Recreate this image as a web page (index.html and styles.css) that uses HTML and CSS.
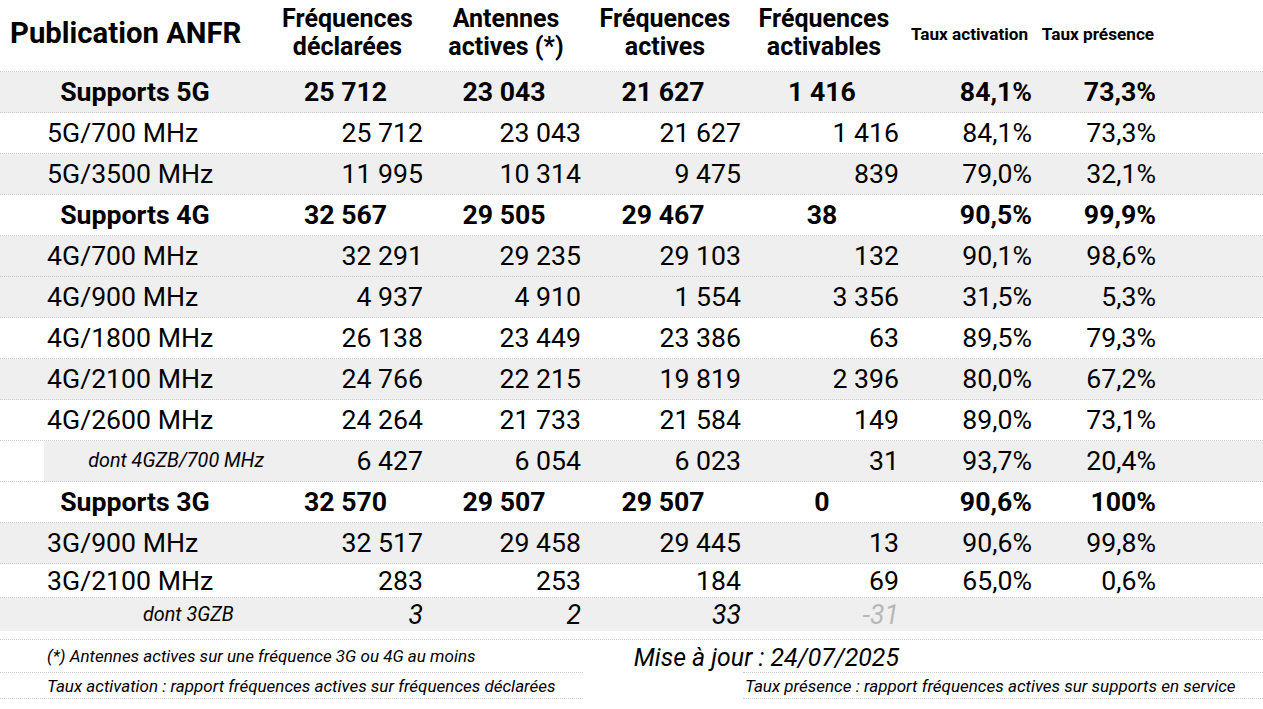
FILE: index.html
```html
<!DOCTYPE html>
<html lang="fr">
<head>
<meta charset="utf-8">
<title>Publication ANFR</title>
<link rel="stylesheet" href="styles.css">
</head>
<body>
<div class="sheet">
  <div class="head">
    <div class="head-title">Publication ANFR</div>
    <div class="head-col">Fréquences<br>déclarées</div>
    <div class="head-col">Antennes<br>actives (*)</div>
    <div class="head-col">Fréquences<br>actives</div>
    <div class="head-col">Fréquences<br>activables</div>
    <div class="head-col head-small">Taux activation</div>
    <div class="head-col head-small">Taux présence</div>
    <div></div>
  </div>

  <div class="row alt total">
    <div class="lbl">Supports 5G</div><div class="num">25 712</div><div class="num">23 043</div><div class="num">21 627</div><div class="num">1 416</div><div class="pct">84,1%</div><div class="pct">73,3%</div><div></div>
  </div>
  <div class="row">
    <div class="lbl">5G/700 MHz</div><div class="num">25 712</div><div class="num">23 043</div><div class="num">21 627</div><div class="num">1 416</div><div class="pct">84,1%</div><div class="pct">73,3%</div><div></div>
  </div>
  <div class="row alt">
    <div class="lbl">5G/3500 MHz</div><div class="num">11 995</div><div class="num">10 314</div><div class="num">9 475</div><div class="num">839</div><div class="pct">79,0%</div><div class="pct">32,1%</div><div></div>
  </div>

  <div class="row total">
    <div class="lbl">Supports 4G</div><div class="num">32 567</div><div class="num">29 505</div><div class="num">29 467</div><div class="num">38</div><div class="pct">90,5%</div><div class="pct">99,9%</div><div></div>
  </div>
  <div class="row alt">
    <div class="lbl">4G/700 MHz</div><div class="num">32 291</div><div class="num">29 235</div><div class="num">29 103</div><div class="num">132</div><div class="pct">90,1%</div><div class="pct">98,6%</div><div></div>
  </div>
  <div class="row alt">
    <div class="lbl">4G/900 MHz</div><div class="num">4 937</div><div class="num">4 910</div><div class="num">1 554</div><div class="num">3 356</div><div class="pct">31,5%</div><div class="pct">5,3%</div><div></div>
  </div>
  <div class="row">
    <div class="lbl">4G/1800 MHz</div><div class="num">26 138</div><div class="num">23 449</div><div class="num">23 386</div><div class="num">63</div><div class="pct">89,5%</div><div class="pct">79,3%</div><div></div>
  </div>
  <div class="row alt">
    <div class="lbl">4G/2100 MHz</div><div class="num">24 766</div><div class="num">22 215</div><div class="num">19 819</div><div class="num">2 396</div><div class="pct">80,0%</div><div class="pct">67,2%</div><div></div>
  </div>
  <div class="row">
    <div class="lbl">4G/2600 MHz</div><div class="num">24 264</div><div class="num">21 733</div><div class="num">21 584</div><div class="num">149</div><div class="pct">89,0%</div><div class="pct">73,1%</div><div></div>
  </div>
  <div class="row sub-4g">
    <div class="lbl lbl-sub">dont 4GZB/700 MHz</div><div class="num">6 427</div><div class="num">6 054</div><div class="num">6 023</div><div class="num">31</div><div class="pct">93,7%</div><div class="pct">20,4%</div><div></div>
  </div>

  <div class="row total">
    <div class="lbl">Supports 3G</div><div class="num">32 570</div><div class="num">29 507</div><div class="num">29 507</div><div class="num">0</div><div class="pct">90,6%</div><div class="pct">100%</div><div></div>
  </div>
  <div class="row alt">
    <div class="lbl">3G/900 MHz</div><div class="num">32 517</div><div class="num">29 458</div><div class="num">29 445</div><div class="num">13</div><div class="pct">90,6%</div><div class="pct">99,8%</div><div></div>
  </div>
  <div class="row short">
    <div class="lbl">3G/2100 MHz</div><div class="num">283</div><div class="num">253</div><div class="num">184</div><div class="num">69</div><div class="pct">65,0%</div><div class="pct">0,6%</div><div></div>
  </div>
  <div class="row alt short2 italic">
    <div class="lbl lbl-sub3">dont 3GZB</div><div class="num">3</div><div class="num">2</div><div class="num">33</div><div class="num muted">-31</div><div class="pct"></div><div class="pct"></div><div></div>
  </div>

  <div class="foot">
    <div class="foot-row foot-row1">
      <div class="note">(*) Antennes actives sur une fréquence 3G ou 4G au moins</div>
      <div class="update">Mise à jour : 24/07/2025</div>
    </div>
    <div class="foot-row foot-row2">
      <div class="note lined">Taux activation : rapport fréquences actives sur fréquences déclarées</div>
      <div></div>
      <div class="note note-right lined">Taux présence : rapport fréquences actives sur supports en service</div>
    </div>
  </div>
</div>
</body>
</html>
```

FILE: styles.css
```css
* { box-sizing: border-box; }

html, body {
  margin: 0;
  padding: 0;
  background: #ffffff;
}

body {
  font-family: Roboto, "Liberation Sans", sans-serif;
  color: #000000;
  width: 1263px;
}

.sheet {
  width: 1263px;
}

.head,
.row {
  display: grid;
  grid-template-columns: 268px 159px 158px 160px 158px 133px 124px 1fr;
  align-items: center;
  border-bottom: 1px dotted #cccccc;
}

.head {
  height: 72px;
}

.head-title {
  font-size: 29.3px;
  font-weight: 700;
  padding-left: 10px;
  padding-bottom: 5px;
  white-space: nowrap;
}

.head-col {
  font-size: 25px;
  font-weight: 700;
  line-height: 28px;
  text-align: center;
  padding-bottom: 6px;
}

.head-small {
  font-size: 17.2px;
  line-height: 20px;
  white-space: nowrap;
  padding-bottom: 4px;
}

.row {
  height: 41px;
  font-size: 26.67px;
  line-height: 32px;
}

.row.alt {
  background: #efefef;
}

.row.sub-4g {
  background: linear-gradient(to right, #ffffff 44px, #efefef 44px);
}

.lbl {
  padding-left: 47px;
  white-space: nowrap;
}

.total .lbl {
  padding-left: 2px;
  text-align: center;
}

.total {
  font-weight: 700;
}

.num,
.pct {
  text-align: right;
  padding-right: 4px;
  white-space: nowrap;
}

.total .num {
  text-align: center;
}

.lbl-sub {
  font-style: italic;
  font-size: 19.8px;
  text-align: right;
  padding-left: 0;
  padding-right: 4px;
}

.lbl-sub3 {
  font-size: 19.8px;
  padding-left: 143px;
}

.italic {
  font-style: italic;
}

.muted {
  color: #b7b7b7;
}

.row.short {
  height: 34px;
  line-height: 30px;
}

.row.short2 {
  height: 33px;
  border-bottom: none;
  line-height: 30px;
}

.foot {
  margin-top: 8px;
  border-top: 1px dotted #cccccc;
}

.foot-row {
  display: grid;
  grid-template-columns: 583px 160px 1fr;
  align-items: center;
}

.foot-row1 {
  height: 32px;
  grid-template-columns: 583px 320px 1fr;
}

.foot-row2 {
  height: 27px;
}

.note {
  font-style: italic;
  font-size: 17px;
  padding-left: 47px;
  white-space: nowrap;
  height: 100%;
  display: flex;
  align-items: center;
}

.note.lined {
  border-top: 1px dotted #cccccc;
  border-bottom: 1px dotted #cccccc;
}

.note-right {
  padding-left: 2px;
}

.update {
  font-style: italic;
  font-size: 24.9px;
  text-align: right;
  padding-right: 4px;
  white-space: nowrap;
  position: relative;
  top: 1px;
}
```
